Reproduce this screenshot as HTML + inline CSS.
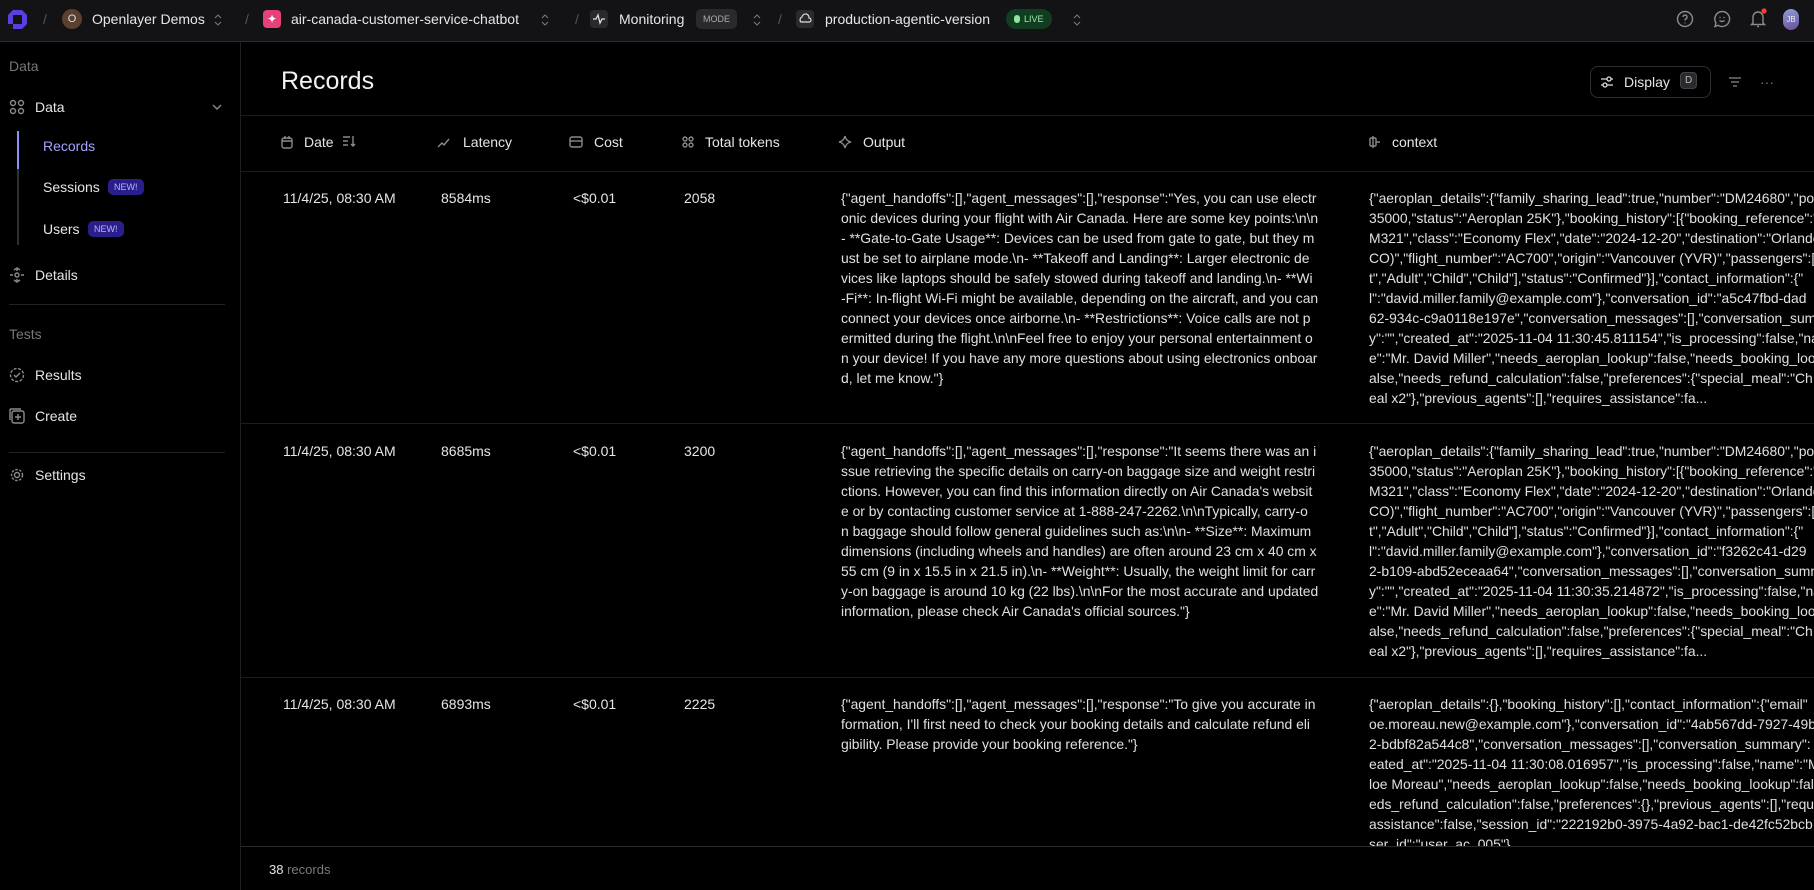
<!DOCTYPE html>
<html><head><meta charset="utf-8"><style>
*{box-sizing:border-box;margin:0;padding:0}
body{width:1814px;height:890px;background:#000;color:#e6e6e6;font-family:"Liberation Sans",sans-serif;font-size:14px;position:relative;overflow:hidden}
.a{position:absolute;white-space:nowrap}
.top{position:absolute;left:0;top:0;width:1814px;height:42px;background:#131316;border-bottom:1px solid #2c2c30}
.sl{color:#55555a;font-size:14px}
.side{position:absolute;left:0;top:42px;width:241px;height:848px;border-right:1px solid #1e1e21}
.lab{color:#77777c}
.item{color:#e6e6e6;font-size:14px}
.new{background:#2a1f8a;color:#b9b3ff;font-size:9px;border-radius:5px;padding:3px 6px}
.hl{position:absolute;left:241px;width:1573px;height:1px;background:#1c1c1f}
.txt{position:absolute;white-space:pre;line-height:20px;font-size:13.9px;color:#e0e0e0;overflow:hidden}
.ic{stroke:#8a8a90;fill:none;stroke-width:1.4}
</style></head><body>
<div class="top">
 <svg class="a" style="left:7px;top:9px" width="21" height="21" viewBox="0 0 21 21"><path d="M6 1h9l5 5v9l-5 5H6l-5-5V6z" fill="#5b3fe0"/><rect x="6" y="6" width="9" height="9" fill="#131316"/><path d="M1 15h5v5z" fill="#131316"/></svg>
 <span class="a sl" style="left:43px;top:11px">/</span>
 <div class="a" style="left:62px;top:9px;width:20px;height:20px;border-radius:50%;background:#5a4030;color:#ddd;font-size:11px;text-align:center;line-height:20px">O</div>
 <span class="a" style="left:92px;top:11px">Openlayer Demos</span>
 <svg class="a" style="left:213px;top:12px" width="10" height="16"><path d="M2 6l3-3 3 3M2 10l3 3 3-3" stroke="#77777c" fill="none" stroke-width="1.1"/></svg>
 <span class="a sl" style="left:245px;top:11px">/</span>
 <div class="a" style="left:263px;top:10px;width:18px;height:18px;border-radius:4px;background:#e8417a;color:#fff;font-size:12px;text-align:center;line-height:18px">✦</div>
 <span class="a" style="left:291px;top:11px">air-canada-customer-service-chatbot</span>
 <svg class="a" style="left:540px;top:12px" width="10" height="16"><path d="M2 6l3-3 3 3M2 10l3 3 3-3" stroke="#77777c" fill="none" stroke-width="1.1"/></svg>
 <span class="a sl" style="left:575px;top:11px">/</span>
 <div class="a" style="left:590px;top:10px;width:18px;height:18px;border-radius:4px;background:#2a2a2e"><svg width="18" height="18"><path d="M3 9h3l2-4 2 8 2-4h3" stroke="#ddd" fill="none" stroke-width="1.3"/></svg></div>
 <span class="a" style="left:619px;top:11px">Monitoring</span>
 <span class="a" style="left:696px;top:9px;background:#2a2a2e;color:#aaa;font-size:9px;border-radius:5px;padding:5px 7px">MODE</span>
 <svg class="a" style="left:752px;top:12px" width="10" height="16"><path d="M2 6l3-3 3 3M2 10l3 3 3-3" stroke="#77777c" fill="none" stroke-width="1.1"/></svg>
 <span class="a sl" style="left:778px;top:11px">/</span>
 <div class="a" style="left:796px;top:10px;width:18px;height:18px;border-radius:4px;background:#2a2a2e"><svg width="18" height="18"><path d="M5 12a3 3 0 0 1 1-5 3.5 3.5 0 0 1 7 1 2 2 0 0 1 0 4z" stroke="#ddd" fill="none" stroke-width="1.2"/></svg></div>
 <span class="a" style="left:825px;top:11px">production-agentic-version</span>
 <span class="a" style="left:1006px;top:9px;background:#113d20;color:#9fe6b0;font-size:9px;border-radius:10px;padding:5px 8px"><span style="display:inline-block;width:6px;height:8px;border-radius:3px;background:#8fe3a3;margin-right:4px;vertical-align:-1px"></span>LIVE</span>
 <svg class="a" style="left:1072px;top:12px" width="10" height="16"><path d="M2 6l3-3 3 3M2 10l3 3 3-3" stroke="#77777c" fill="none" stroke-width="1.1"/></svg>
 <svg class="a" style="left:1675px;top:9px" width="20" height="20"><circle cx="10" cy="10" r="7.5" class="ic"/><path d="M8 8a2 2 0 1 1 2.5 2c-.5.2-.5.8-.5 1.5" class="ic"/><circle cx="10" cy="14" r=".6" fill="#8a8a90"/></svg>
 <svg class="a" style="left:1712px;top:9px" width="20" height="20"><path d="M10 2.5a7.5 7.5 0 1 1-4 13.8L3 17.5l1-3.5A7.5 7.5 0 0 1 10 2.5z" class="ic"/><path d="M7.5 11.5q2.5 2 5 0" class="ic"/><circle cx="8" cy="8.5" r=".7" fill="#8a8a90"/><circle cx="12" cy="8.5" r=".7" fill="#8a8a90"/></svg>
 <svg class="a" style="left:1748px;top:8px" width="20" height="22"><path d="M5 15V9a5 5 0 0 1 10 0v6l1.5 1.5h-13z" class="ic"/><path d="M9 18.5h2" class="ic"/><circle cx="16" cy="3" r="2.6" fill="#ff3b2f"/></svg>
 <div class="a" style="left:1783px;top:9px;width:16px;height:21px;border-radius:8px;background:linear-gradient(160deg,#8ea0d8,#6a4d9a);color:#eee;font-size:8px;line-height:21px;text-align:center">JB</div>
</div>

<div class="side">
 <span class="a lab" style="left:9px;top:16px">Data</span>
 <svg class="a" style="left:9px;top:57px" width="16" height="16"><circle cx="4" cy="4" r="2.5" class="ic"/><circle cx="12" cy="4" r="2.5" class="ic"/><circle cx="4" cy="12" r="2.5" class="ic"/><circle cx="12" cy="12" r="2.5" class="ic"/></svg>
 <span class="a item" style="left:35px;top:57px">Data</span>
 <svg class="a" style="left:211px;top:60px" width="12" height="10"><path d="M2 3l4 4 4-4" class="ic" stroke-width="1"/></svg>
 <div class="a" style="left:17px;top:89px;width:2px;height:114px;background:#2e2e33"></div>
 <div class="a" style="left:17px;top:89px;width:2px;height:38px;background:#8f8ff7"></div>
 <span class="a" style="left:43px;top:96px;color:#a3a3ff">Records</span>
 <span class="a item" style="left:43px;top:137px">Sessions</span><span class="a new" style="left:108px;top:137px">NEW!</span>
 <span class="a item" style="left:43px;top:179px">Users</span><span class="a new" style="left:88px;top:179px">NEW!</span>
 <svg class="a" style="left:9px;top:225px" width="16" height="16"><circle cx="8" cy="8" r="2" class="ic"/><path d="M8 1v3M8 12v3M1 8h3M12 8h3M5 3l3-2 3 2M5 13l3 2 3-2" class="ic" stroke-width="1"/></svg>
 <span class="a item" style="left:35px;top:225px">Details</span>
 <div class="a" style="left:9px;top:262px;width:216px;height:1px;background:#222"></div>
 <span class="a lab" style="left:9px;top:284px">Tests</span>
 <svg class="a" style="left:9px;top:325px" width="16" height="16"><circle cx="8" cy="8" r="6.5" class="ic" stroke-dasharray="3 1.5"/><path d="M5 8l2 2 4-4" class="ic"/></svg>
 <span class="a item" style="left:35px;top:325px">Results</span>
 <svg class="a" style="left:9px;top:366px" width="16" height="16"><rect x="3" y="3" width="12" height="12" rx="2" class="ic"/><path d="M1 12V2q0-1 1-1h10M9 6v6M6 9h6" class="ic"/></svg>
 <span class="a item" style="left:35px;top:366px">Create</span>
 <div class="a" style="left:9px;top:410px;width:216px;height:1px;background:#222"></div>
 <svg class="a" style="left:9px;top:425px" width="16" height="16"><circle cx="8" cy="8" r="2.5" class="ic"/><circle cx="8" cy="8" r="5.5" class="ic" stroke-dasharray="2.5 1.5" stroke-width="2"/></svg>
 <span class="a item" style="left:35px;top:425px">Settings</span>
</div>

<span class="a" style="left:281px;top:67px;font-size:25px;color:#f2f2f2">Records</span>
<div class="a" style="left:1590px;top:66px;width:121px;height:32px;border:1px solid #2e2e33;border-radius:8px"></div>
<svg class="a" style="left:1600px;top:75px" width="14" height="14"><path d="M1 4h12M1 10h12" stroke="#ddd" stroke-width="1.3"/><circle cx="9" cy="4" r="2" fill="#000" stroke="#ddd" stroke-width="1.3"/><circle cx="5" cy="10" r="2" fill="#000" stroke="#ddd" stroke-width="1.3"/></svg>
<span class="a" style="left:1624px;top:74px">Display</span>
<span class="a" style="left:1680px;top:72px;background:#2a2a2e;border:1px solid #444;border-radius:4px;font-size:10px;color:#bbb;padding:2px 4px">D</span>
<svg class="a" style="left:1728px;top:76px" width="14" height="12"><path d="M1 2h12M3 6h8M5 10h4" stroke="#8a8a90" stroke-width="1.3"/></svg>
<span class="a" style="left:1760px;top:74px;color:#777">···</span>

<div class="hl" style="top:115px"></div>
<div class="hl" style="top:171px"></div>
<div class="hl" style="top:423px"></div>
<div class="hl" style="top:677px"></div>
<div class="hl" style="top:846px;background:#2a2a2e"></div>

<svg class="a" style="left:280px;top:135px" width="14" height="14"><rect x="2" y="3" width="10" height="10" rx="2" class="ic"/><path d="M2 6h10M5 1v3M9 1v3" class="ic"/></svg>
<span class="a" style="left:304px;top:134px">Date</span>
<svg class="a" style="left:342px;top:134px" width="14" height="14"><path d="M1 3h7M1 7h5M1 11h5M11 2v10M9 10l2 2 2-2" class="ic"/></svg>
<svg class="a" style="left:437px;top:135px" width="14" height="14"><path d="M1 12l4-4 2 2 5-6" class="ic"/></svg>
<span class="a" style="left:463px;top:134px">Latency</span>
<svg class="a" style="left:569px;top:135px" width="14" height="14"><rect x="1" y="2" width="12" height="10" rx="2" class="ic"/><path d="M1 6h12" class="ic"/></svg>
<span class="a" style="left:594px;top:134px">Cost</span>
<svg class="a" style="left:681px;top:135px" width="14" height="14"><circle cx="4" cy="4" r="2" class="ic"/><circle cx="10" cy="4" r="2" class="ic"/><circle cx="4" cy="10" r="2" class="ic"/><circle cx="10" cy="10" r="2" class="ic"/></svg>
<span class="a" style="left:705px;top:134px">Total tokens</span>
<svg class="a" style="left:838px;top:135px" width="14" height="14"><path d="M7 1q1 5 6 6-5 1-6 6-1-5-6-6 5-1 6-6z" class="ic"/></svg>
<span class="a" style="left:863px;top:134px">Output</span>
<svg class="a" style="left:1367px;top:135px" width="14" height="14"><rect x="3" y="3" width="6" height="8" rx="1" class="ic"/><path d="M6 1v12M9 7h4" class="ic"/></svg>
<span class="a" style="left:1392px;top:134px">context</span>

<span class="a" style="left:283px;top:190px">11/4/25, 08:30 AM</span>
<span class="a" style="left:441px;top:190px">8584ms</span>
<span class="a" style="left:573px;top:190px">&lt;$0.01</span>
<span class="a" style="left:684px;top:190px">2058</span>
<span class="a" style="left:283px;top:443px">11/4/25, 08:30 AM</span>
<span class="a" style="left:441px;top:443px">8685ms</span>
<span class="a" style="left:573px;top:443px">&lt;$0.01</span>
<span class="a" style="left:684px;top:443px">3200</span>
<span class="a" style="left:283px;top:696px">11/4/25, 08:30 AM</span>
<span class="a" style="left:441px;top:696px">6893ms</span>
<span class="a" style="left:573px;top:696px">&lt;$0.01</span>
<span class="a" style="left:684px;top:696px">2225</span>

<div class="txt" style="left:841px;top:188px;width:490px">{"agent_handoffs":[],"agent_messages":[],"response":"Yes, you can use electr
onic devices during your flight with Air Canada. Here are some key points:\n\n
- **Gate-to-Gate Usage**: Devices can be used from gate to gate, but they m
ust be set to airplane mode.\n- **Takeoff and Landing**: Larger electronic de
vices like laptops should be safely stowed during takeoff and landing.\n- **Wi
-Fi**: In-flight Wi-Fi might be available, depending on the aircraft, and you can
connect your devices once airborne.\n- **Restrictions**: Voice calls are not p
ermitted during the flight.\n\nFeel free to enjoy your personal entertainment o
n your device! If you have any more questions about using electronics onboar
d, let me know."}</div>
<div class="txt" style="left:1369px;top:188px;width:445px">{"aeroplan_details":{"family_sharing_lead":true,"number":"DM24680","points":
35000,"status":"Aeroplan 25K"},"booking_history":[{"booking_reference":"
M321","class":"Economy Flex","date":"2024-12-20","destination":"Orlando (M
CO)","flight_number":"AC700","origin":"Vancouver (YVR)","passengers":["
t","Adult","Child","Child"],"status":"Confirmed"}],"contact_information":{"
l":"david.miller.family@example.com"},"conversation_id":"a5c47fbd-dad
62-934c-c9a0118e197e","conversation_messages":[],"conversation_summar
y":"","created_at":"2025-11-04 11:30:45.811154","is_processing":false,"na
e":"Mr. David Miller","needs_aeroplan_lookup":false,"needs_booking_lookup
alse,"needs_refund_calculation":false,"preferences":{"special_meal":"Ch
eal x2"},"previous_agents":[],"requires_assistance":fa...</div>

<div class="txt" style="left:841px;top:441px;width:490px">{"agent_handoffs":[],"agent_messages":[],"response":"It seems there was an i
ssue retrieving the specific details on carry-on baggage size and weight restri
ctions. However, you can find this information directly on Air Canada's websit
e or by contacting customer service at 1-888-247-2262.\n\nTypically, carry-o
n baggage should follow general guidelines such as:\n\n- **Size**: Maximum
dimensions (including wheels and handles) are often around 23 cm x 40 cm x
55 cm (9 in x 15.5 in x 21.5 in).\n- **Weight**: Usually, the weight limit for carr
y-on baggage is around 10 kg (22 lbs).\n\nFor the most accurate and updated
information, please check Air Canada's official sources."}</div>
<div class="txt" style="left:1369px;top:441px;width:445px">{"aeroplan_details":{"family_sharing_lead":true,"number":"DM24680","points":
35000,"status":"Aeroplan 25K"},"booking_history":[{"booking_reference":"
M321","class":"Economy Flex","date":"2024-12-20","destination":"Orlando (M
CO)","flight_number":"AC700","origin":"Vancouver (YVR)","passengers":["
t","Adult","Child","Child"],"status":"Confirmed"}],"contact_information":{"
l":"david.miller.family@example.com"},"conversation_id":"f3262c41-d29
2-b109-abd52eceaa64","conversation_messages":[],"conversation_summar
y":"","created_at":"2025-11-04 11:30:35.214872","is_processing":false,"na
e":"Mr. David Miller","needs_aeroplan_lookup":false,"needs_booking_lookup
alse,"needs_refund_calculation":false,"preferences":{"special_meal":"Ch
eal x2"},"previous_agents":[],"requires_assistance":fa...</div>

<div class="txt" style="left:841px;top:694px;width:490px">{"agent_handoffs":[],"agent_messages":[],"response":"To give you accurate in
formation, I'll first need to check your booking details and calculate refund eli
gibility. Please provide your booking reference."}</div>
<div class="txt" style="left:1369px;top:694px;width:445px;height:152px">{"aeroplan_details":{},"booking_history":[],"contact_information":{"email"
oe.moreau.new@example.com"},"conversation_id":"4ab567dd-7927-49b
2-bdbf82a544c8","conversation_messages":[],"conversation_summary":
eated_at":"2025-11-04 11:30:08.016957","is_processing":false,"name":"M
loe Moreau","needs_aeroplan_lookup":false,"needs_booking_lookup":false
eds_refund_calculation":false,"preferences":{},"previous_agents":[],"requ
assistance":false,"session_id":"222192b0-3975-4a92-bac1-de42fc52bcb
ser_id":"user_ac_005"}</div>

<span class="a" style="left:269px;top:862px;font-size:13px"><span style="color:#e6e6e6">38</span> <span style="color:#7a7a80">records</span></span>
</body></html>
